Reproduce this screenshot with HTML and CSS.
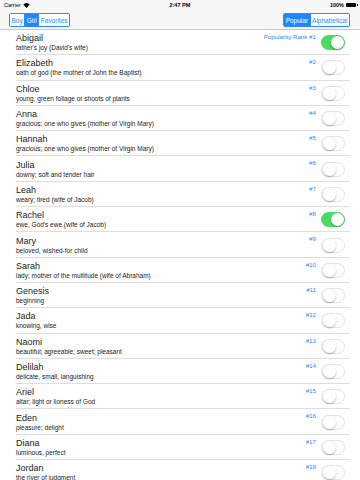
FILE: index.html
```html
<!DOCTYPE html>
<html lang="en">
<head>
  <meta charset="UTF-8" />
  <meta name="viewport" content="width=device-width, initial-scale=1.0"/>
  <title>Baby Names</title>
  <link rel="stylesheet" href="styles.css">
</head>
<body>
  <div class="status-bar">
    <div class="carrier">Carrier
      <svg class="wifi" width="7" height="5" viewBox="0 0 14 10">
        <path d="M7 10 L0.5 3.2 A9.5 9.5 0 0 1 13.5 3.2 Z" fill="#000"/>
      </svg>
    </div>
    <div class="clock">2:47 PM</div>
    <div class="battery">100%
      <span class="battery-body"><span class="battery-cap"></span></span>
    </div>
  </div>

  <div class="nav-bar">
    <div class="segmented">
      <button>Boy</button>
      <button class="active">Girl</button>
      <button>Favorites</button>
    </div>
    <div class="segmented">
      <button class="active">Popular</button>
      <button>Alphabetical</button>
    </div>
  </div>

  <ul class="name-list">
    <li class="name-row">
      <div class="name-text"><div class="name">Abigail</div><div class="meaning">father's joy (David's wife)</div></div>
      <div class="rank">Popularity Rank #1</div>
      <span class="switch on"><span class="knob"></span></span>
    </li>
    <li class="name-row">
      <div class="name-text"><div class="name">Elizabeth</div><div class="meaning">oath of god (the mother of John the Baptist)</div></div>
      <div class="rank">#2</div>
      <span class="switch"><span class="knob"></span></span>
    </li>
    <li class="name-row">
      <div class="name-text"><div class="name">Chloe</div><div class="meaning">young, green foliage or shoots of plants</div></div>
      <div class="rank">#3</div>
      <span class="switch"><span class="knob"></span></span>
    </li>
    <li class="name-row">
      <div class="name-text"><div class="name">Anna</div><div class="meaning">gracious; one who gives (mother of Virgin Mary)</div></div>
      <div class="rank">#4</div>
      <span class="switch"><span class="knob"></span></span>
    </li>
    <li class="name-row">
      <div class="name-text"><div class="name">Hannah</div><div class="meaning">gracious; one who gives (mother of Virgin Mary)</div></div>
      <div class="rank">#5</div>
      <span class="switch"><span class="knob"></span></span>
    </li>
    <li class="name-row">
      <div class="name-text"><div class="name">Julia</div><div class="meaning">downy; soft and tender hair</div></div>
      <div class="rank">#6</div>
      <span class="switch"><span class="knob"></span></span>
    </li>
    <li class="name-row">
      <div class="name-text"><div class="name">Leah</div><div class="meaning">weary; tired (wife of Jacob)</div></div>
      <div class="rank">#7</div>
      <span class="switch"><span class="knob"></span></span>
    </li>
    <li class="name-row">
      <div class="name-text"><div class="name">Rachel</div><div class="meaning">ewe, God's ewe (wife of Jacob)</div></div>
      <div class="rank">#8</div>
      <span class="switch on"><span class="knob"></span></span>
    </li>
    <li class="name-row">
      <div class="name-text"><div class="name">Mary</div><div class="meaning">beloved, wished-for child</div></div>
      <div class="rank">#9</div>
      <span class="switch"><span class="knob"></span></span>
    </li>
    <li class="name-row">
      <div class="name-text"><div class="name">Sarah</div><div class="meaning">lady; mother of the multitude (wife of Abraham)</div></div>
      <div class="rank">#10</div>
      <span class="switch"><span class="knob"></span></span>
    </li>
    <li class="name-row">
      <div class="name-text"><div class="name">Genesis</div><div class="meaning">beginning</div></div>
      <div class="rank">#11</div>
      <span class="switch"><span class="knob"></span></span>
    </li>
    <li class="name-row">
      <div class="name-text"><div class="name">Jada</div><div class="meaning">knowing, wise</div></div>
      <div class="rank">#12</div>
      <span class="switch"><span class="knob"></span></span>
    </li>
    <li class="name-row">
      <div class="name-text"><div class="name">Naomi</div><div class="meaning">beautiful; agreeable; sweet; pleasant</div></div>
      <div class="rank">#13</div>
      <span class="switch"><span class="knob"></span></span>
    </li>
    <li class="name-row">
      <div class="name-text"><div class="name">Delilah</div><div class="meaning">delicate, small, languishing</div></div>
      <div class="rank">#14</div>
      <span class="switch"><span class="knob"></span></span>
    </li>
    <li class="name-row">
      <div class="name-text"><div class="name">Ariel</div><div class="meaning">altar; light or lioness of God</div></div>
      <div class="rank">#15</div>
      <span class="switch"><span class="knob"></span></span>
    </li>
    <li class="name-row">
      <div class="name-text"><div class="name">Eden</div><div class="meaning">pleasure; delight</div></div>
      <div class="rank">#16</div>
      <span class="switch"><span class="knob"></span></span>
    </li>
    <li class="name-row">
      <div class="name-text"><div class="name">Diana</div><div class="meaning">luminous, perfect</div></div>
      <div class="rank">#17</div>
      <span class="switch"><span class="knob"></span></span>
    </li>
    <li class="name-row">
      <div class="name-text"><div class="name">Jordan</div><div class="meaning">the river of judgment</div></div>
      <div class="rank">#18</div>
      <span class="switch"><span class="knob"></span></span>
    </li>
  </ul>
</body>
</html>
```

FILE: styles.css
```css
body {
  font-family: 'Liberation Sans', Arial, sans-serif;
  margin: 0;
  background: #fff;
  color: #000;
  overflow: hidden;
}

.status-bar {
  height: 10px;
  background: #f7f7f7;
  display: flex;
  align-items: center;
  justify-content: space-between;
  padding: 0 4px;
  font-size: 5.5px;
}

.carrier {
  display: flex;
  align-items: center;
  gap: 2px;
}

.clock {
  font-weight: bold;
}

.battery {
  display: flex;
  align-items: center;
  gap: 2px;
  font-weight: bold;
}

.battery-body {
  display: inline-block;
  width: 10px;
  height: 4px;
  background: #000;
  border-radius: 1px;
  position: relative;
}

.battery-cap {
  position: absolute;
  right: -2px;
  top: 1px;
  width: 1px;
  height: 2px;
  background: #000;
}

.nav-bar {
  height: 20px;
  background: #f7f7f7;
  border-bottom: 1px solid #c8c8c8;
  box-sizing: border-box;
  display: flex;
  align-items: center;
  justify-content: space-between;
  padding: 0 10px 0 9px;
}

.segmented {
  display: flex;
  height: 14px;
  border: 1px solid #2a8cff;
  border-radius: 2px;
  box-sizing: border-box;
  overflow: hidden;
  margin-top: 1px;
}

.segmented button {
  font-family: inherit;
  font-size: 6.5px;
  border: none;
  border-left: 1px solid #2a8cff;
  background: #fff;
  color: #2a8cff;
  padding: 0 1.5px;
  margin: 0;
}

.segmented button:first-child {
  border-left: none;
}

.segmented button.active {
  background: #1f86ff;
  color: #fff;
}

.name-list {
  list-style: none;
  margin: 0;
  padding: 0;
}

.name-row {
  height: 25.3px;
  box-sizing: border-box;
  margin: 0 10px 0 16px;
  padding-right: 5px;
  border-bottom: 1px solid #dedede;
  display: flex;
  align-items: center;
}

.name-text {
  flex: 1;
  padding-top: 1px;
}

.name {
  font-size: 9px;
  line-height: 11px;
  color: #222;
}

.meaning {
  font-size: 6.5px;
  line-height: 8px;
  color: #222;
}

.rank {
  align-self: flex-start;
  margin-top: 3px;
  margin-right: 5px;
  font-size: 6.2px;
  color: #2a8cff;
}

.switch {
  width: 24px;
  height: 15px;
  border-radius: 8px;
  border: 1px solid #e3e3e3;
  box-sizing: border-box;
  background: #fff;
  display: flex;
  align-items: center;
  padding: 0 0.5px;
  margin-top: 1px;
}

.switch .knob {
  width: 13px;
  height: 13px;
  border-radius: 50%;
  background: #fff;
  box-shadow: 0 1px 2px rgba(0, 0, 0, 0.3);
}

.switch.on {
  background: #4cd964;
  border-color: #4cd964;
  justify-content: flex-end;
}
```
